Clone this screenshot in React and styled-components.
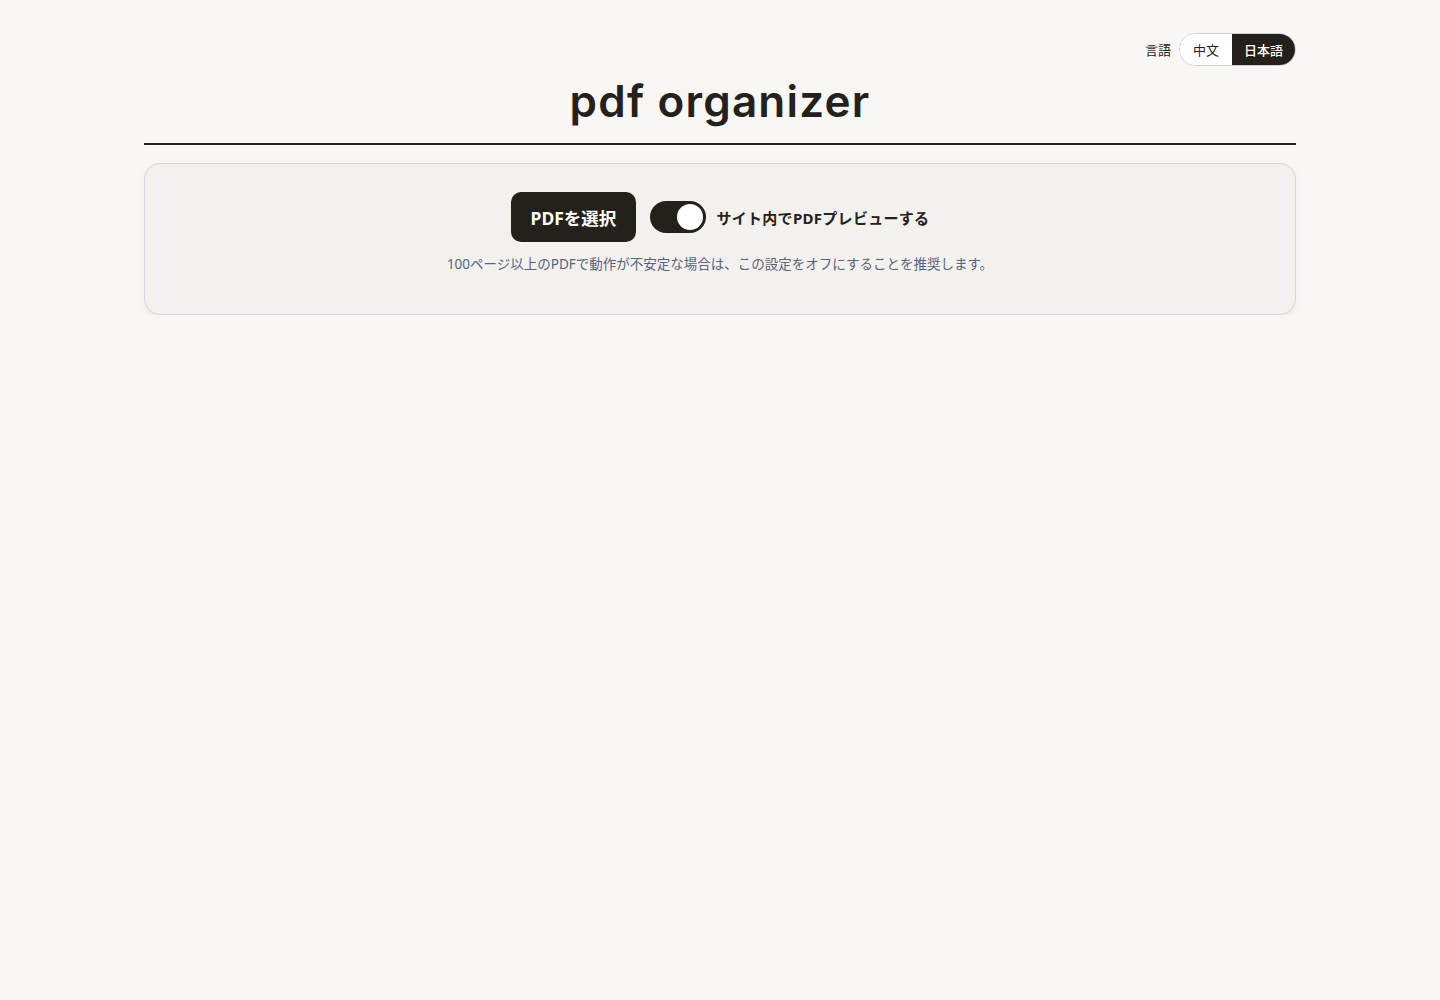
import styled, { createGlobalStyle } from "styled-components";
import { useState } from "react";

const GlobalStyle = createGlobalStyle`
  * { box-sizing: border-box; }
  body {
    margin: 0;
    background: #f8f7f4;
    color: #24211c;
    font-family: "Noto Sans", "Noto Sans CJK JP", sans-serif;
  }
`;

const Page = styled.div`
  width: 1152px;
  margin: 0 auto;
  padding-top: 33px;
`;

const Header = styled.header`
  display: flex;
  flex-direction: column;
  border-bottom: 2px solid #24211c;
  padding-bottom: 14px;
`;

const LangBar = styled.div`
  display: flex;
  justify-content: flex-end;
  align-items: center;
  gap: 8px;
  height: 33px;
`;

const LangLabel = styled.span`
  font-size: 13px;
  color: #24211c;
`;

const Segmented = styled.div`
  display: flex;
  height: 33px;
  border: 1px solid #cfcde0;
  border-radius: 999px;
  overflow: hidden;
  background: #fff;
`;

const Segment = styled.button`
  border: none;
  padding: 0 ${(p) => (p.$wide ? "12px" : "13px")};
  font-family: inherit;
  font-size: 13px;
  cursor: pointer;
  background: ${(p) => (p.$active ? "#24211c" : "#fff")};
  color: ${(p) => (p.$active ? "#fff" : "#24211c")};
  font-weight: ${(p) => (p.$active ? 500 : 400)};
`;

const Title = styled.h1`
  margin: 7px 0 0;
  text-align: center;
  font-family: Inter, "Noto Sans", sans-serif;
  font-size: 44px;
  font-weight: 600;
  line-height: 56px;
  letter-spacing: 1.2px;
`;

const Card = styled.section`
  margin-top: 18px;
  background: #f3f1ee;
  border: 1px solid #d5d3e2;
  border-radius: 16px;
  box-shadow: 0 4px 10px rgba(40, 35, 30, 0.05);
  padding: 28px 20px 41px;
  display: flex;
  flex-direction: column;
  align-items: center;
  gap: 11px;
`;

const Controls = styled.div`
  display: flex;
  align-items: center;
  gap: 14px;
`;

const PickButton = styled.button`
  height: 50px;
  padding: 0 20px;
  border: none;
  border-radius: 10px;
  background: #24211c;
  color: #fff;
  font-family: inherit;
  font-size: 17.5px;
  font-weight: 700;
  cursor: pointer;
`;

const ToggleLabel = styled.label`
  display: flex;
  align-items: center;
  gap: 10px;
  font-size: 15px;
  font-weight: 700;
  letter-spacing: 0.3px;
  cursor: pointer;
`;

const Track = styled.span`
  width: 56px;
  height: 32px;
  border-radius: 999px;
  background: ${(p) => (p.$on ? "#24211c" : "#c9c6c0")};
  padding: 3px;
  display: flex;
  justify-content: ${(p) => (p.$on ? "flex-end" : "flex-start")};
`;

const Knob = styled.span`
  width: 26px;
  height: 26px;
  border-radius: 50%;
  background: #fff;
`;

const Hint = styled.p`
  margin: 0;
  font-size: 13.5px;
  color: #58627a;
`;

export default function App() {
  const [lang, setLang] = useState("ja");
  const [preview, setPreview] = useState(true);

  return (
    <>
      <GlobalStyle />
      <Page>
        <Header>
          <LangBar>
            <LangLabel>言語</LangLabel>
            <Segmented>
              <Segment $active={lang === "zh"} onClick={() => setLang("zh")}>
                中文
              </Segment>
              <Segment $wide $active={lang === "ja"} onClick={() => setLang("ja")}>
                日本語
              </Segment>
            </Segmented>
          </LangBar>
          <Title>pdf organizer</Title>
        </Header>
        <Card>
          <Controls>
            <PickButton>PDFを選択</PickButton>
            <ToggleLabel onClick={() => setPreview(!preview)}>
              <Track $on={preview}>
                <Knob />
              </Track>
              サイト内でPDFプレビューする
            </ToggleLabel>
          </Controls>
          <Hint>100ページ以上のPDFで動作が不安定な場合は、この設定をオフにすることを推奨します。</Hint>
        </Card>
      </Page>
    </>
  );
}
